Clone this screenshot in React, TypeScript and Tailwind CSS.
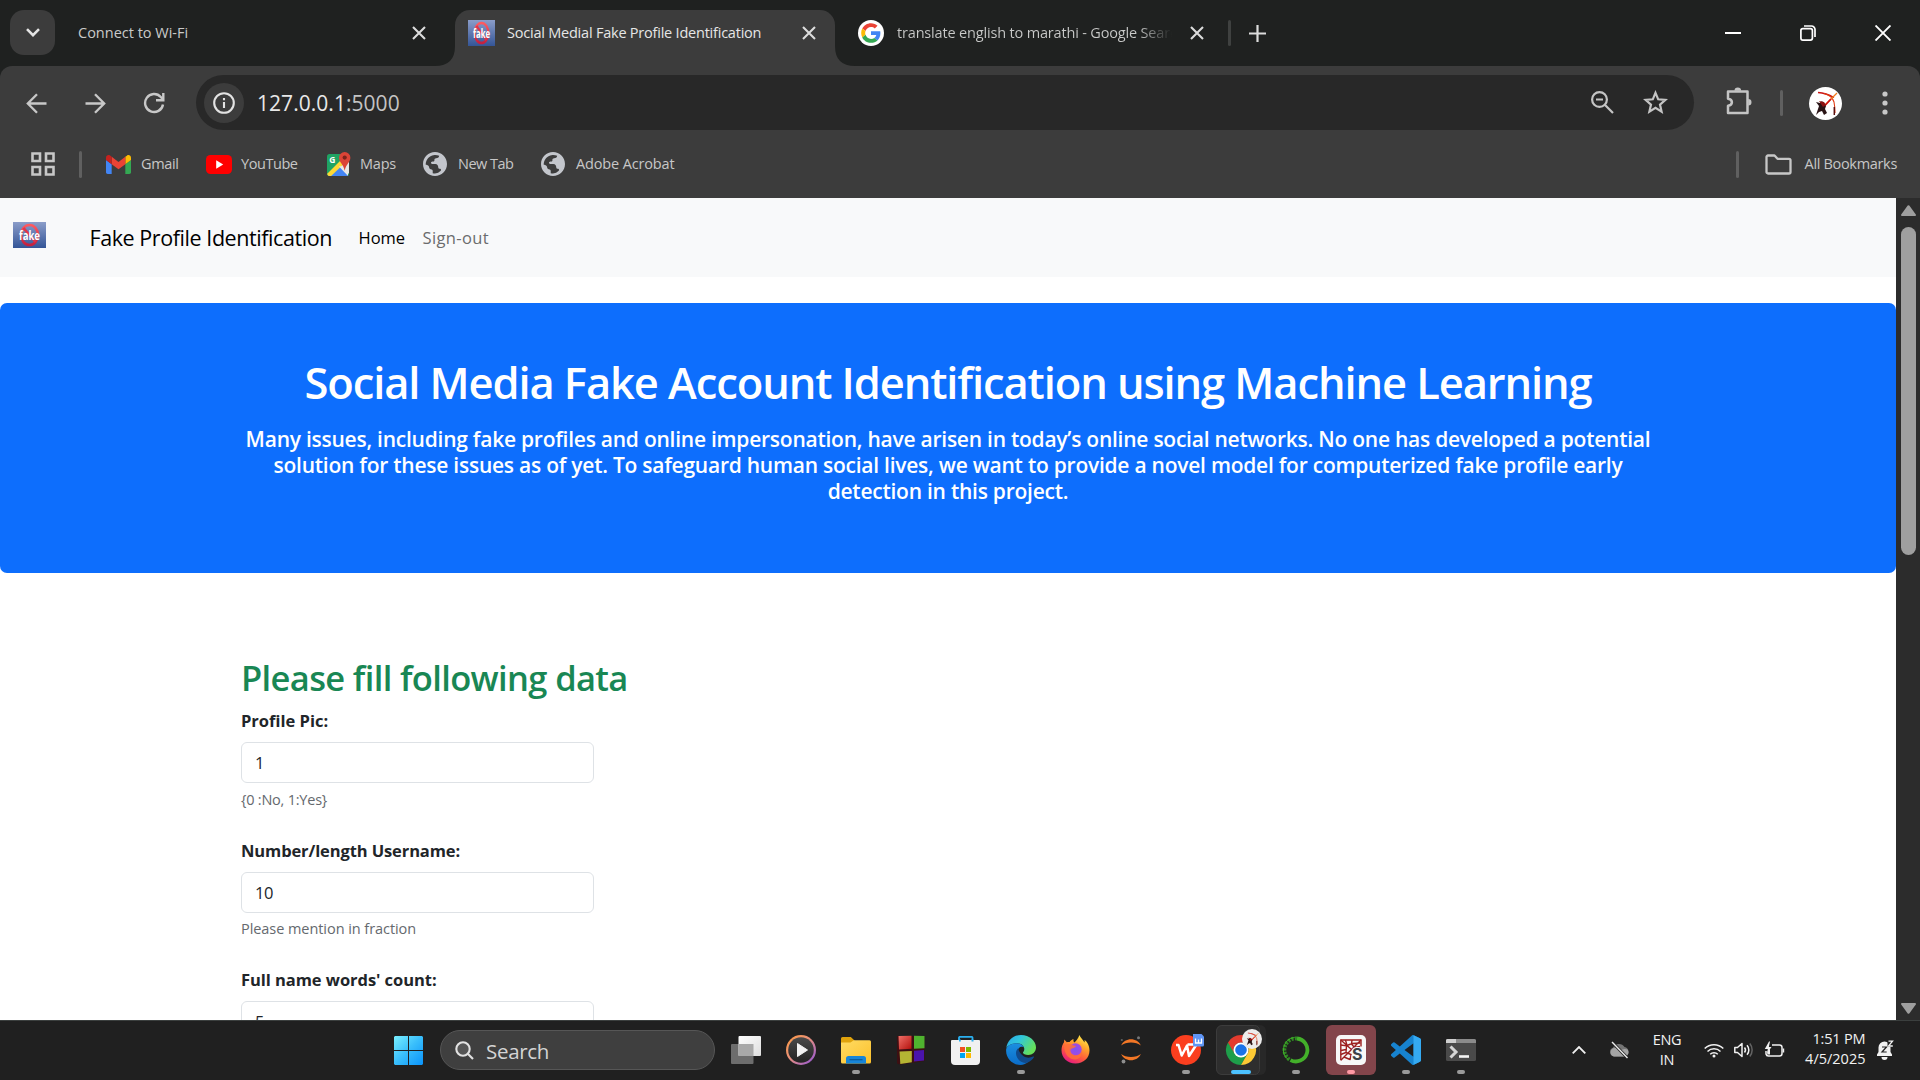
import React from "react";
import type { ReactNode } from "react";

/* ---------- browser icons ---------- */

function FakeLogo({ className, id }: { className: string; id: string }) {
  return (
    <svg viewBox="0 0 33 26" preserveAspectRatio="none" className={className}>
      <defs>
        <linearGradient id={id} x1="0" y1="0" x2="0" y2="1">
          <stop offset="0" stopColor="#8b9dc9" />
          <stop offset="1" stopColor="#345597" />
        </linearGradient>
        <linearGradient id={id + "r"} x1="0" y1="0" x2="0" y2="1">
          <stop offset="0" stopColor="#ff5a5f" />
          <stop offset="1" stopColor="#c4213f" />
        </linearGradient>
      </defs>
      <rect width="33" height="26" fill={`url(#${id})`} />
      <ellipse cx="16.5" cy="13" rx="8.4" ry="10" fill="none" stroke={`url(#${id}r)`} strokeWidth="2.6" />
      <path d="M10.5 6 22.5 20" stroke="#e0354a" strokeWidth="2.6" />
      <text x="16.5" y="17.6" textAnchor="middle" textLength="21" lengthAdjust="spacingAndGlyphs" fontSize="12.5" fontWeight="700" fill="#fff" fontFamily="Open Sans, sans-serif">
        fake
      </text>
    </svg>
  );
}

function GoogleIcon() {
  return (
    <svg viewBox="0 0 26 26" className="size-[26px] shrink-0">
      <circle cx="13" cy="13" r="13" fill="#fff" />
      <g transform="translate(3.2 3.2) scale(.408)">
        <path fill="#EA4335" d="M24 9.5c3.54 0 6.71 1.22 9.21 3.6l6.85-6.85C35.9 2.38 30.47 0 24 0 14.62 0 6.51 5.38 2.56 13.22l7.98 6.19C12.43 13.72 17.74 9.5 24 9.5z" />
        <path fill="#4285F4" d="M46.98 24.55c0-1.57-.15-3.09-.38-4.55H24v9.02h12.94c-.58 2.96-2.26 5.48-4.78 7.18l7.73 6c4.51-4.18 7.09-10.36 7.09-17.65z" />
        <path fill="#FBBC05" d="M10.53 28.59c-.48-1.45-.76-2.99-.76-4.59s.27-3.14.76-4.59l-7.98-6.19C.92 16.46 0 20.12 0 24c0 3.88.92 7.54 2.56 10.78l7.97-6.19z" />
        <path fill="#34A853" d="M24 48c6.48 0 11.93-2.13 15.89-5.81l-7.73-6c-2.15 1.45-4.92 2.3-8.16 2.3-6.26 0-11.57-4.22-13.47-9.91l-7.98 6.19C6.51 42.62 14.62 48 24 48z" />
      </g>
    </svg>
  );
}

function CloseIcon({ className = "" }: { className?: string }) {
  return (
    <svg viewBox="0 0 14 14" className={"size-[14px] shrink-0 " + className} fill="none" stroke="#dcdcdc" strokeWidth="2.1">
      <path d="M1 1l12 12M13 1 1 13" />
    </svg>
  );
}

function GlobeIcon() {
  return (
    <svg viewBox="2 2 20 20" className="size-6 shrink-0" fill="#c3c6cc">
      <path d="M12 2C6.48 2 2 6.48 2 12s4.480 10 10 10 10-4.480 10-10S17.520 2 12 2zm3.500 3.200c-.3 1.500-1.300 2-2.600 2.100-1 .1-1.500.6-1.400 1.500.1.900-.5 1.200-1.600 1.200-1.200.1-1.500.9-1 1.600.6.700 2 .4 3.500.4 1.400.1 2.300 1.300 2.300 2.700 0 .9.600 1.300 1.500 1.300.8.100 1 .8.600 1.600A7.900 7.900 0 0 1 12 20c-.700 0-1.300-.1-1.900-.2v-2c0-.9-.7-1.400-1.600-1.500-.9-.1-1.300-.8-1.400-1.600-.1-.9-1.200-1.800-2.900-2.200A8 8 0 0 1 15.500 5.200z" fillRule="evenodd" />
    </svg>
  );
}

function ArcherFigure() {
  return (
    <g>
      <path d="M9 5.5Q17 6 25 10.5" stroke="#c81414" strokeWidth="1.3" fill="none" />
      <path d="M15 6.5Q23 8.5 25 15Q26 20 26 26" stroke="#e03a12" strokeWidth="1.1" fill="none" />
      <path d="M25.3 20v8" stroke="#5a1010" strokeWidth="1.5" />
      <path d="M28 6 15 19" stroke="#f07a1a" strokeWidth="1.2" />
      <path d="M22 12 14.5 20" stroke="#d01010" strokeWidth="1.8" />
      <path d="M7 15l4 1 2-2 2 3 2 2-1 3 2 4-3 2-2-4-3 1-3 3 2-6 1-3z" fill="#2a1416" />
      <path d="M10 14l5 1 2 3-3 2z" fill="#8c1212" />
    </g>
  );
}

/* ---------- browser chrome ---------- */

function TabStrip() {
  return (
    <div className="flex h-[66px] items-start bg-[#1f2120]">
      <div className="ml-[10px] mt-[10px] flex h-[45px] w-[45px] items-center justify-center rounded-[14px] bg-[#3c3c3c]">
        <svg viewBox="0 0 14 9" className="h-[9px] w-[14px]" fill="none" stroke="#e4e4e4" strokeWidth="2.6">
          <path d="M1 1.2l6 6 6-6" />
        </svg>
      </div>
      <div className="flex h-[66px] w-[380px] items-center pl-[23px]">
        <span className="w-[334px] text-[14.5px] text-[#c9cac9]">Connect to Wi-Fi</span>
        <CloseIcon />
      </div>
      <svg viewBox="0 0 20 20" className="size-5 self-end" fill="#3c3c3c">
        <path d="M20 0v20H0Q20 20 20 0z" />
      </svg>
      <div className="mt-[10px] flex h-[56px] w-[380px] items-center rounded-t-[15px] bg-[#3c3c3c] pb-[10px] pl-[13px]">
        <FakeLogo className="h-[26px] w-[27px]" id="fav" />
        <span className="ml-[12px] w-[294px] whitespace-nowrap text-[14.5px] tracking-[-0.22px] text-[#e6e6e6]">
          Social Medial Fake Profile Identification
        </span>
        <CloseIcon className="ml-[1px]" />
      </div>
      <svg viewBox="0 0 20 20" className="size-5 self-end" fill="#3c3c3c">
        <path d="M0 0v20h20Q0 20 0 0z" />
      </svg>
      <div className="flex h-[66px] w-[415px] shrink-0 items-center pl-[3px]">
        <GoogleIcon />
        <span className="ml-[13px] w-[275px] shrink-0 overflow-hidden whitespace-nowrap bg-gradient-to-r from-[#c9cac9] from-88% to-[#1f2120] bg-clip-text text-[14.5px] tracking-[-0.17px] text-transparent">
          translate english to marathi - Google Search
        </span>
        <CloseIcon className="ml-[18px]" />
        <div className="ml-[24px] h-[26px] w-[3px] shrink-0 rounded bg-[#3f4140]" />
        <svg viewBox="0 0 17 17" className="ml-[18px] size-[17px] shrink-0" stroke="#dcdcdc" strokeWidth="2.2">
          <path d="M8.500 0v17M0 8.500h17" />
        </svg>
      </div>
      <div className="ml-auto mr-[29px] flex h-[66px] items-center gap-[59px]">
        <div className="h-[2px] w-4 bg-white" />
        <svg viewBox="0 0 16 16" className="size-4" fill="none" stroke="#fff" strokeWidth="1.7">
          <rect x=".9" y="3.600" width="11.500" height="11.500" rx="2" />
          <path d="M4 1h7.500a3.500 3.500 0 0 1 3.500 3.500V12" />
        </svg>
        <svg viewBox="0 0 16 16" className="size-4" fill="none" stroke="#fff" strokeWidth="1.9">
          <path d="M.5.5l15 15M15.500.5l-15 15" />
        </svg>
      </div>
    </div>
  );
}

function Toolbar() {
  return (
    <div className="flex h-[73px] items-center pl-[26px]">
      <svg viewBox="0 0 21 21" className="mt-px size-[21px]" fill="none" stroke="#c8c8c8" strokeWidth="2.3">
        <path d="M20.500 10.500H2M11 1.200 1.800 10.500l9.200 9.300" />
      </svg>
      <svg viewBox="0 0 21 21" className="mt-px ml-[38px] size-[21px]" fill="none" stroke="#c8c8c8" strokeWidth="2.3">
        <path d="M.5 10.500H19M10 1.200l9.200 9.300L10 19.800" />
      </svg>
      <svg viewBox="0 0 22 22" className="mt-px ml-[37px] size-[22px]" fill="none" stroke="#c8c8c8" strokeWidth="2.4">
        <path d="M20 12.500A9 9 0 1 1 17.800 5l2 2.200" />
        <path d="M20.300 1v7.300H13" />
      </svg>
      <div className="ml-[31px] flex h-[55px] w-[1498px] items-center rounded-full bg-[#282828] pl-[8px]">
        <div className="flex size-[40px] items-center justify-center rounded-full bg-[#3c3c3c]">
          <svg viewBox="0 0 22 22" className="size-[22px]" fill="none" stroke="#e3e3e3" strokeWidth="2.1">
            <circle cx="11" cy="11" r="9.800" />
            <path d="M11 10v6M11 6v2.200" />
          </svg>
        </div>
        <span className="mt-[2px] ml-[13px] w-[1334px] text-[21px] leading-none tracking-[0.04px] text-[#e8e8e8]">
          127.0.0.1<span className="text-[#c4c4c4]">:5000</span>
        </span>
        <svg viewBox="0 0 23 23" className="size-[23px]" fill="none" stroke="#c4c4c4" strokeWidth="2.2">
          <circle cx="8.500" cy="8.500" r="7.400" />
          <path d="M13.800 13.800 22 22M5 8.500h7" />
        </svg>
        <svg viewBox="0 0 25 24" className="-mt-[2px] ml-[29px] h-[24px] w-[25px]" fill="none" stroke="#c4c4c4" strokeWidth="2.200">
          <path d="M12.500 2.800l2.700 6.500 7.200.6-5.400 4.700 1.600 7-6.100-3.700-6.100 3.700 1.600-7L2.600 9.900l7.200-.6z" />
        </svg>
      </div>
      <svg viewBox="0 0 28 28" className="-mt-[4px] ml-[31px] size-7" fill="none" stroke="#c4c4c4" strokeWidth="2.500" strokeLinejoin="round">
        <path d="M3 4.500h19.500V26H3v-7.300c5.200-.6 5.200-6.400 0-7z" />
        <path d="M9.500 3.800a3.300 3.300 0 0 1 6.600 0zM23.200 12v6.600a3.300 3.300 0 0 0 0-6.600z" fill="#c4c4c4" stroke="none" />
      </svg>
      <div className="ml-[27px] h-[26px] w-[3px] rounded bg-[#606060]" />
      <svg viewBox="0 0 33 33" className="mt-[1px] ml-[26px] size-[33px]">
        <circle cx="16.500" cy="16.500" r="16.500" fill="#fff" />
        <ArcherFigure />
      </svg>
      <svg viewBox="0 0 6 24" className="mt-px ml-[40px] h-6 w-[6px]" fill="#c8c8c8">
        <circle cx="3" cy="3" r="2.600" />
        <circle cx="3" cy="12" r="2.600" />
        <circle cx="3" cy="21" r="2.600" />
      </svg>
    </div>
  );
}

function BookmarksBar() {
  return (
    <div className="flex h-[59px] items-start text-[14.5px] text-[#c7c7c7]">
      <div className="flex h-[50px] w-full items-center pl-[31px]">
        <svg viewBox="0 0 24 24" className="size-6" fill="none" stroke="#c7c7c7" strokeWidth="2.600">
          <path d="M1.500 1.500h7.500v7.500H1.500zM15 1.500h7.500v7.500H15zM1.500 15h7.500v7.500H1.500zM15 15h7.500v7.500H15z" />
        </svg>
        <div className="ml-[24px] h-[27px] w-[3px] rounded bg-[#606060]" />
        <svg viewBox="52 42 88 66" className="ml-[24px] h-[19px] w-[25px]">
          <path fill="#4285f4" d="M58 108h14V74L52 59v43c0 3.320 2.690 6 6 6" />
          <path fill="#34a853" d="M120 108h14c3.320 0 6-2.690 6-6V59l-20 15" />
          <path fill="#fbbc04" d="M120 48v26l20-15v-8c0-7.420-8.470-11.650-14.400-7.200" />
          <path fill="#ea4335" d="M72 74V48l24 18 24-18v26L96 92" />
          <path fill="#c5221f" d="M52 51v8l20 15V48l-5.600-4.400c-5.940-4.450-14.400-.22-14.400 7.200" />
        </svg>
        <span className="ml-[10px] w-[64px] tracking-[-0.36px]">Gmail</span>
        <svg viewBox="0 0 26 19" className="ml-px h-[19px] w-[26px]">
          <rect width="26" height="19" rx="4.500" fill="#f00" />
          <path d="M10.200 5.200v8.600l7-4.300z" fill="#fff" />
        </svg>
        <span className="ml-[9px] w-[85px] tracking-[-0.44px]">YouTube</span>
        <svg viewBox="0 0 25 25" className="size-[25px]">
          <defs>
            <clipPath id="mapclip">
              <rect x="1" y="2" width="22" height="22" rx="2.500" />
            </clipPath>
          </defs>
          <g clipPath="url(#mapclip)">
            <rect x="1" y="2" width="22" height="22" fill="#1fa463" />
            <path d="M12 13 24 25H1z" fill="#4285f4" />
            <path d="M13 12 24 23V3h-6z" fill="#e4e4e4" />
            <path d="M12 15.500 21 24.500H3z" fill="#4285f4" />
            <path d="M1 22 18 5l3.500 3.500L3 26z" fill="#fdd835" />
            <path d="M13 14.500 22 24V13z" fill="#e8e8e8" />
          </g>
          <text x="3.200" y="10.800" fontSize="8.500" fontWeight="700" fill="#fff" fontFamily="Open Sans, sans-serif">
            G
          </text>
          <path d="M18.700 0a5.700 5.700 0 0 1 5.700 5.700c0 4.300-4.200 6-5.700 13-1.500-7-5.700-8.700-5.700-13A5.700 5.700 0 0 1 18.700 0z" fill="#db4437" />
          <circle cx="18.700" cy="5.600" r="2.100" fill="#7b231c" />
        </svg>
        <span className="ml-[9px] w-[63px] tracking-[-0.23px]">Maps</span>
        <GlobeIcon />
        <span className="ml-[11px] w-[83px] tracking-[-0.5px]">New Tab</span>
        <GlobeIcon />
        <span className="ml-[11px] tracking-[-0.15px]">Adobe Acrobat</span>
        <div className="ml-auto h-[27px] w-[3px] rounded bg-[#606060]" />
        <svg viewBox="0 0 27 21" className="ml-[26px] h-[21px] w-[27px]" fill="none" stroke="#c7c7c7" strokeWidth="2.300" strokeLinejoin="round">
          <path d="M1.500 3a1.500 1.500 0 0 1 1.500-1.500h6.500l3 3.300H24a1.500 1.500 0 0 1 1.500 1.500V18a1.500 1.500 0 0 1-1.500 1.500H3A1.500 1.500 0 0 1 1.500 18z" />
        </svg>
        <span className="mr-[23px] ml-[13px] tracking-[-0.32px]">All Bookmarks</span>
      </div>
    </div>
  );
}

/* ---------- web page ---------- */

function Field({ label, labelClass, value, help, helpClass }: { label: string; labelClass: string; value: string; help: string; helpClass: string }) {
  return (
    <div className="mb-[27.5px] flex w-[353px] shrink-0 flex-col">
      <label className={"h-[26px] whitespace-nowrap text-[16.5px] leading-[26px] font-bold text-[#212529] " + labelClass}>{label}</label>
      <div className="mt-2 flex h-[41px] items-center rounded-[6px] border border-[#dee2e6] pt-[2px] pl-[13px] text-[16.5px] tracking-[-0.5px] text-[#212529]">
        {value}
      </div>
      <div className={"h-[27px] text-[14.5px] text-[#65696e] " + helpClass}>{help}</div>
    </div>
  );
}

function WebPage() {
  return (
    <div className="flex h-[822px] w-[1896px] flex-col overflow-hidden bg-white">
      <nav className="flex h-[79px] shrink-0 items-center bg-[#f8f9fa]">
        <FakeLogo className="mb-[5px] ml-[13px] h-[26px] w-[33px]" id="nav" />
        <span className="mt-[2px] ml-[43.5px] w-[269px] whitespace-nowrap text-[21.5px] tracking-[-0.43px] text-black">Fake Profile Identification</span>
        <span className="mt-[2px] w-[64px] text-[16.5px] text-black">Home</span>
        <span className="mt-[2px] text-[16.5px] tracking-[0.36px] text-[#6b6c6d]">Sign-out</span>
      </nav>
      <section className="mt-[26px] flex h-[270px] shrink-0 flex-col items-center rounded-[7px] bg-[#0d6efd] pt-[53px] text-center text-white">
        <h1 className="h-[54px] whitespace-nowrap text-[43.5px] leading-[54px] font-semibold tracking-[-1.1px]">
          Social Media Fake Account Identification using Machine Learning
        </h1>
        <p className="mt-[16px] whitespace-nowrap text-[21px] leading-[26px] font-semibold tracking-[-0.245px]">
          Many issues, including fake profiles and online impersonation, have arisen in today’s online social networks. No one has developed a potential
          <br />
          solution for these issues as of yet. To safeguard human social lives, we want to provide a novel model for computerized fake profile early
          <br />
          detection in this project.
        </p>
      </section>
      <section className="mt-[84px] flex flex-col pl-[241px]">
        <h2 className="mb-[9px] h-[42px] text-[34.5px] leading-[42px] font-semibold tracking-[-0.64px] text-[#198754]">Please fill following data</h2>
        <Field label="Profile Pic:" labelClass="tracking-normal" value="1" help="{0 :No, 1:Yes}" helpClass="tracking-[-0.22px] leading-[33px]" />
        <Field label="Number/length Username:" labelClass="tracking-[-0.11px]" value="10" help="Please mention in fraction" helpClass="tracking-[-0.06px] leading-[31px]" />
        <Field label="Full name words' count:" labelClass="tracking-[-0.05px]" value="5" help="" helpClass="" />
      </section>
    </div>
  );
}

function Scrollbar() {
  return (
    <div className="flex w-6 flex-col items-center bg-[#2c2c2c] pt-[7px] pb-[6px] pl-[1px]">
      <svg viewBox="0 0 15 11" className="h-[11px] w-[15px]" fill="#9f9f9f" stroke="#9f9f9f" strokeWidth="2" strokeLinejoin="round">
        <path d="M7.500 1.200 14 10H1z" />
      </svg>
      <div className="mt-[11px] h-[328px] w-[15px] rounded-full bg-[#9f9f9f]" />
      <svg viewBox="0 0 15 11" className="mt-auto h-[11px] w-[15px]" fill="#9f9f9f" stroke="#9f9f9f" strokeWidth="2" strokeLinejoin="round">
        <path d="M7.500 9.800 14 1H1z" />
      </svg>
    </div>
  );
}

/* ---------- taskbar ---------- */

function TaskItem({ children, indicator = "none", boxClass = "" }: { children: ReactNode; indicator?: "none" | "idle" | "active" | "alert"; boxClass?: string }) {
  return (
    <div className={"relative flex h-[50px] w-[50px] shrink-0 items-center justify-center rounded-[6px] " + boxClass}>
      {children}
      {indicator === "idle" && <div className="absolute bottom-[1px] h-1 w-2 rounded-full bg-[#9a9a9a]" />}
      {indicator === "active" && <div className="absolute bottom-[1px] h-1 w-5 rounded-full bg-[#4cc2ff]" />}
      {indicator === "alert" && <div className="absolute bottom-[1px] h-1 w-2 rounded-full bg-[#ff99a4]" />}
    </div>
  );
}

function WindowsIcon() {
  return (
    <svg viewBox="0 0 29 29" className="size-[29px]">
      <defs>
        <linearGradient id="win" gradientUnits="userSpaceOnUse" x1="0" y1="0" x2="29" y2="29">
          <stop offset="0" stopColor="#7af0ff" />
          <stop offset=".5" stopColor="#38bdfb" />
          <stop offset="1" stopColor="#0a93fb" />
        </linearGradient>
      </defs>
      <path d="M1 0h13v14H0V1zM15 0h13l1 1v13H15zM0 15h14v14H1l-1-1zM15 15h14v13l-1 1H15z" fill="url(#win)" />
    </svg>
  );
}

function TaskViewIcon() {
  return (
    <svg viewBox="0 0 30 28" className="h-7 w-[30px]">
      <defs>
        <linearGradient id="tv" x1="0" y1="0" x2="1" y2="1">
          <stop offset="0" stopColor="#fff" />
          <stop offset="1" stopColor="#dedede" />
        </linearGradient>
      </defs>
      <rect x="0" y="8" width="22.500" height="20" rx="1" fill="#6d6d6d" />
      <rect x="7.500" y="0" width="22.500" height="20" rx="1" fill="url(#tv)" />
      <path d="M7.500 8h15v12h-15z" fill="#a9a9a9" />
    </svg>
  );
}

function MediaPlayerIcon() {
  return (
    <svg viewBox="0 0 30 30" className="size-[30px]">
      <defs>
        <linearGradient id="mp" x1="0" y1="0" x2="1" y2="1">
          <stop offset="0" stopColor="#ff9a3c" />
          <stop offset=".45" stopColor="#e8917c" />
          <stop offset="1" stopColor="#8a4fe0" />
        </linearGradient>
        <linearGradient id="mpi" x1="0" y1="0" x2="0" y2="1">
          <stop offset="0" stopColor="#4a4a4a" />
          <stop offset="1" stopColor="#232323" />
        </linearGradient>
      </defs>
      <circle cx="15" cy="15" r="15" fill="url(#mp)" />
      <circle cx="15" cy="15" r="12.800" fill="url(#mpi)" />
      <path d="M11.500 8.500v13L21.500 15z" fill="#f3f3f3" stroke="#f3f3f3" strokeWidth="1" strokeLinejoin="round" />
    </svg>
  );
}

function ExplorerIcon() {
  return (
    <svg viewBox="0 0 30 27" className="mt-[1px] h-[27px] w-[30px]">
      <defs>
        <linearGradient id="fe" x1="0" y1="0" x2="1" y2="1">
          <stop offset="0" stopColor="#ffdb63" />
          <stop offset="1" stopColor="#fcc12c" />
        </linearGradient>
      </defs>
      <path d="M0 1.500A1.500 1.500 0 0 1 1.500 0h8.300L13.500 3.500V9H0z" fill="#e0a30c" />
      <path d="M0 5.500h9.500l3.300-2.300H28.500A1.500 1.500 0 0 1 30 4.700V25a1.500 1.500 0 0 1-1.500 1.500h-27A1.500 1.500 0 0 1 0 25z" fill="url(#fe)" />
      <path d="M5 26.500v-5a2.500 2.500 0 0 1 2.500-2.500h15a2.500 2.500 0 0 1 2.500 2.500v5z" fill="#1785d8" />
      <path d="M8.500 22.700h13" stroke="#0b5899" strokeWidth="1.200" />
    </svg>
  );
}

function BlocksIcon() {
  return (
    <svg viewBox="0 0 28 30" className="h-[30px] w-7">
      <defs>
        <linearGradient id="bl" x1="0" y1="0" x2="1" y2="1">
          <stop offset="0" stopColor="#f07068" />
          <stop offset="1" stopColor="#b3100c" />
        </linearGradient>
      </defs>
      <path d="M0 1v27.500l3 1L27.500 26V1z" fill="#3d0f12" />
      <path d="M1.500 1 14.500.800V13.800L2 14.500z" fill="url(#bl)" />
      <path d="M17 .800 27.500 1v12.200L17 13.800z" fill="#4fb32f" />
      <path d="M2.500 16.500 14.800 16v11.300L3.300 29z" fill="#b5b533" />
      <path d="M17 15.800 27 15v10.500l-10 1z" fill="#4a14ac" />
    </svg>
  );
}

function StoreIcon() {
  return (
    <svg viewBox="0 0 29 29" className="mr-px size-[29px]">
      <path d="M8 6V1.800A1 1 0 0 1 9 .800h11.500a1 1 0 0 1 1 1V6" fill="none" stroke="#2ab0f0" strokeWidth="1.800" />
      <path d="M1 4h27a1 1 0 0 1 1 1v20a4 4 0 0 1-4 4H4a4 4 0 0 1-4-4V5a1 1 0 0 1 1-1z" fill="#f1f1f1" />
      <path d="M8 4.500h1.800M20.500 4.500h2" stroke="#2ab0f0" strokeWidth="2" />
      <path d="M9 11h5v5H9z" fill="#f25022" />
      <path d="M15 11h5v5h-5z" fill="#7fba00" />
      <path d="M9 17h5v5H9z" fill="#00a4ef" />
      <path d="M15 17h5v5h-5z" fill="#ffb900" />
    </svg>
  );
}

function EdgeIcon() {
  return (
    <svg viewBox="0 0 30 30" className="size-[30px]">
      <defs>
        <linearGradient id="eg" x1="0" y1="0" x2="1" y2=".5">
          <stop offset="0" stopColor="#2aa5e8" />
          <stop offset=".45" stopColor="#30c6dc" />
          <stop offset="1" stopColor="#66e05a" />
        </linearGradient>
        <linearGradient id="eb" x1="0" y1="0" x2="0" y2="1">
          <stop offset="0" stopColor="#1b8fe0" />
          <stop offset="1" stopColor="#0b6cc8" />
        </linearGradient>
      </defs>
      <path d="M.3 13C1.500 5 7.500 0 15 0c8.500 0 15 6 15 12.500 0 4.500-3.500 7.500-7.800 7.500-3 0-5.200-1.200-5.200-2.300 0-.8 1.300-1.400 1.300-3.700C18.300 11 15.500 8.200 11 8.200 6 8.200 1.500 10.500.3 13z" fill="url(#eg)" />
      <path d="M.2 14C1.200 10.500 5.500 8.200 10.500 8.200c4 0 6.500 2 7.500 4-3-1.300-6.500.3-6.500 5.300 0 6 5.500 10 11 9-2.200 2-5 3.500-8 3.500C6.500 29.800-.8 23 .2 14z" fill="url(#eb)" />
      <path d="M12.200 13.300C10 15 9.500 18 10.500 21c1.800 5 7 8.300 11.800 6.300 2.500-1.100 4.500-3.200 5.600-5.100.4-.7-.2-1-.8-.7-3 1.700-7 1.500-9.800-.5-2.300-1.800-4.500-4.300-5.100-7.700z" fill="#114a8b" />
    </svg>
  );
}

function FirefoxIcon() {
  return (
    <svg viewBox="0 0 29 30" className="mr-px h-[30px] w-[29px]">
      <defs>
        <linearGradient id="ff" x1=".8" y1="0" x2=".25" y2="1">
          <stop offset="0" stopColor="#fff44f" />
          <stop offset=".35" stopColor="#ffa22c" />
          <stop offset=".65" stopColor="#ff5a3c" />
          <stop offset="1" stopColor="#e31587" />
        </linearGradient>
        <radialGradient id="fp">
          <stop offset="0" stopColor="#7d54f5" />
          <stop offset="1" stopColor="#a24adf" />
        </radialGradient>
      </defs>
      <path d="M18.500 0c.5 2.500 3.500 4.500 5 7.500.3-1 .2-1.800 0-2.500 3 2 5 6 5 10.500C28.500 23 22.500 28.500 14.500 28.500S.5 22.500.5 15.200c0-3.200 1-6 2.500-8L3.300 4.500l2.500 2.800c1-.4 1.800-.4 2.800-.3C9.500 5.500 11 4.500 12.500 4c-.3 1.200 0 2.500.7 3.500 1.500-1 4-4 5.300-7.500z" fill="url(#ff)" />
      <circle cx="14.500" cy="14.500" r="6.200" fill="url(#fp)" />
      <path d="M3 11c2.500-2 5.500-2.500 8-1.500 1 .5 2 1.500 4 1.500-.5 2-4 2-5.500 3.500-.5 3.500 2.500 6 5.500 5.800 2.500 0 4.500-1.500 5.700-4.300.6 4.500-2.200 8.500-6.700 8.500C8.500 24.500 3.500 20 3 11z" fill="#ff7038" opacity=".85" />
    </svg>
  );
}

function JupyterIcon() {
  return (
    <svg viewBox="0 0 22 28" className="h-7 w-[22px]">
      <path d="M1.200 9.500C4.500 1.200 17.500 1.200 20.800 9.500 16.500 5.500 5.500 5.500 1.200 9.500z" fill="#f37726" />
      <path d="M1.200 18C4.500 26.300 17.500 26.300 20.800 18 16.500 22 5.500 22 1.200 18z" fill="#f37726" />
      <circle cx="18.500" cy="1.800" r="1.500" fill="#767677" />
      <circle cx="3.500" cy="25.500" r="1.900" fill="#8e8e8e" />
      <circle cx="1.800" cy="4" r="1.100" fill="#616262" />
    </svg>
  );
}

function WpsIcon() {
  return (
    <svg viewBox="0 0 50 50" className="size-[50px]">
      <circle cx="25" cy="25" r="15" fill="#fb3f1f" />
      <path d="M15 20h2.500l3.200 10.500 5.300-10 2 10.500 7.500-11.500h-9" fill="none" stroke="#fff" strokeWidth="2.500" strokeLinejoin="round" />
      <path d="M32 9h8.500l2.500 2.500V20a1.500 1.500 0 0 1-1.500 1.500H33.500A1.500 1.500 0 0 1 32 20z" fill="#5f95f5" />
      <path d="M34.500 13.500v4.500h6v-4.500M37.500 14.500V18" fill="none" stroke="#fff" strokeWidth="1.300" />
    </svg>
  );
}

function ChromeIcon() {
  return (
    <svg viewBox="0 0 50 50" className="size-[50px] shrink-0">
      <path d="M.5 6A5.500 5.500 0 0 1 6 .5h32.500A5 5 0 0 1 43.500 5.500v39a5 5 0 0 1-5 5H6A5.500 5.500 0 0 1 .5 44z" fill="#2e2e2e" stroke="#3c3c3c" />
      <path d="M12 17.500A15 15 0 0 0 25 40l6.500-11.300L25 25z" fill="#1e9e4a" />
      <path d="M38 17.500A15 15 0 0 1 25 40l6.500-11.300a7.500 7.500 0 0 0 0-7.500l-2-3.700z" fill="#fcc934" />
      <path d="M12 17.500A15 15 0 0 1 38 17.500H25a7.500 7.500 0 0 0-6.500 11.200z" fill="#e33b2e" />
      <circle cx="25" cy="25" r="7.500" fill="#fff" />
      <circle cx="25" cy="25" r="5.800" fill="#1a73e8" />
      <circle cx="36" cy="14" r="10" fill="#ececec" />
      <g transform="translate(27 5) scale(.545)">
        <ArcherFigure />
      </g>
    </svg>
  );
}

function AnacondaIcon() {
  return (
    <svg viewBox="0 0 28 28" className="size-7" fill="none">
      <path d="M15 2.500a11.500 11.500 0 1 1-6.500 21.600" stroke="#43b02a" strokeWidth="3.800" />
      <path d="M15 2.500A11.500 11.500 0 0 0 8.500 24.100" stroke="#2f8a22" strokeWidth="3.800" strokeDasharray="2.200 1.300" />
      <path d="M12.500 1.500A12.500 12.500 0 0 0 6 23.500" stroke="#43b02a" strokeWidth="1" />
    </svg>
  );
}

function SpyderIcon() {
  return (
    <svg viewBox="0 0 30 30" className="size-[30px]">
      <rect width="30" height="30" rx="5" fill="#f7f7f7" />
      <g fill="none" stroke="#9c1f1f" strokeWidth="1.400">
        <path d="M4.800 25.200V5H25v6.500" />
        <path d="M4.800 25.200 15.500 14.500 25 5M4.800 5 15.500 14.500M9.500 5l1.500 5.500 5-2 8.500-.5M4.800 10l5.700.8-.5 6.700-5.200 2M16 5l-.5 4 3 3.500L24 11.500M5 15.500l5-1M10 17.500l5 2-1 5.500M8 22l6 2.500" />
      </g>
      <text x="16" y="25.300" fontSize="16" fontWeight="700" fill="#3c4248" stroke="#f7f7f7" strokeWidth="2" paintOrder="stroke" fontFamily="Inter, sans-serif">
        S
      </text>
    </svg>
  );
}

function VsCodeIcon() {
  return (
    <svg viewBox="0 0 24 24" className="size-[30px]">
      <path
        fill="#1783cf"
        d="M23.150 2.587L18.210.21a1.494 1.494 0 0 0-1.705.29l-9.460 8.630-4.120-3.128a.999.999 0 0 0-1.276.057L.327 7.261A1 1 0 0 0 .326 8.740L3.899 12 .326 15.260a1 1 0 0 0 .001 1.479L1.650 17.940a.999.999 0 0 0 1.276.057l4.120-3.128 9.460 8.630a1.492 1.492 0 0 0 1.704.290l4.942-2.377A1.500 1.500 0 0 0 24 20.060V3.939a1.500 1.500 0 0 0-.850-1.352zm-5.146 14.861L10.826 12l7.178-5.448v10.896z"
      />
      <path fill="#35aaf2" d="M18.004.150l5.146 2.437A1.500 1.500 0 0 1 24 3.939V20.060a1.500 1.500 0 0 1-.850 1.350l-4.942 2.378q-.100.050-.204.080z" />
    </svg>
  );
}

function TerminalIcon() {
  return (
    <svg viewBox="0 0 30 22" className="h-[22px] w-[30px]">
      <rect width="30" height="22" rx="1.500" fill="#4a4a4a" />
      <path d="M0 4V1.500A1.500 1.500 0 0 1 1.500 0h27A1.500 1.500 0 0 1 30 1.500V4z" fill="#8b8b8b" />
      <path d="M0 4V1.500A1.500 1.500 0 0 1 1.500 0H10v4z" fill="#cfcfcf" />
      <path d="M4.500 7.500 10 13l-5.500 5.500" fill="none" stroke="#d6d6d6" strokeWidth="3" />
      <path d="M13 17.500h10" stroke="#f4f4f4" strokeWidth="2.600" />
    </svg>
  );
}

function Tray() {
  return (
    <div className="flex h-full items-center text-[14.5px] leading-5 text-[#f2f2f2]">
      <div className="ml-[77px] flex w-8 justify-center">
        <svg viewBox="0 0 14 8" className="h-2 w-[14px]" fill="none" stroke="#f0f0f0" strokeWidth="1.800">
          <path d="M.7 7.300 7 1l6.300 6.300" />
        </svg>
      </div>
      <div className="ml-1 flex w-10 justify-center">
        <svg viewBox="0 0 21 18" className="h-[18px] w-[21px]">
          <path d="M5 15.500A4.500 4.500 0 0 1 4 6.800 6.500 6.500 0 0 1 15.500 6 5 5 0 0 1 16.500 15.500z" fill="#747474" />
          <path d="M5 15.500a4.300 4.300 0 0 1 1-8.500q3-.5 5 2.500 4-2.500 7.500-1a4.500 4.500 0 0 1-2 7z" fill="#a4a4a4" />
          <path d="M3 1l15.500 16" stroke="#202020" strokeWidth="3" />
          <path d="M3 1l15.500 16" stroke="#ededed" strokeWidth="1.400" />
        </svg>
      </div>
      <div className="ml-2 flex w-10 flex-col items-center tracking-[-0.33px]">
        <span>ENG</span>
        <span>IN</span>
      </div>
      <div className="ml-3 flex w-[30px] justify-center">
        <svg viewBox="0 0 20 16" className="h-4 w-5" fill="none" stroke="#f0f0f0" strokeWidth="1.500">
          <path d="M.7 6.500a13.200 13.200 0 0 1 18.600 0M3.500 9.500a9.200 9.200 0 0 1 13 0M6.200 12.200a5.400 5.400 0 0 1 7.600 0" />
          <circle cx="10" cy="14" r="1.500" fill="#f0f0f0" stroke="none" />
        </svg>
      </div>
      <div className="flex w-[30px] justify-center">
        <svg viewBox="0 0 20 16" className="h-4 w-5" fill="none" stroke="#f0f0f0" strokeWidth="1.500" strokeLinejoin="round">
          <path d="M.8 5.500H3.500L8 1.500v13L3.500 10.500H.8z" />
          <path d="M10.500 5.500a4 4 0 0 1 0 5M13 3.200a7.200 7.200 0 0 1 0 9.600" />
          <path d="M15.800 1.500a10.200 10.200 0 0 1 0 13" stroke="#636363" />
        </svg>
      </div>
      <div className="flex w-[30px] justify-center">
        <svg viewBox="0 0 21 18" className="h-[18px] w-[21px]" fill="none" stroke="#f0f0f0" strokeWidth="1.500">
          <path d="M8 4h7.500A2.500 2.500 0 0 1 18 6.500v6a2.500 2.500 0 0 1-2.500 2.500h-11A2.500 2.500 0 0 1 2 13V10" />
          <path d="M18.700 7.500v4h1.500v-4z" fill="#f0f0f0" stroke="none" />
          <path d="M5 .5.8 8h3L3 12.500 7.500 6H4.800L6 .5z" fill="#f0f0f0" stroke="none" />
          <path d="M3.300 13.500V11L6 7.800v5.700z" fill="#f0f0f0" stroke="none" />
        </svg>
      </div>
      <div className="-mt-[2px] flex w-[76.5px] flex-col items-end">
        <span className="tracking-[-0.17px]">1:51 PM</span>
        <span>4/5/2025</span>
      </div>
      <div className="ml-[4.500px] flex w-[30px] justify-center">
        <svg viewBox="0 0 18 20" className="h-5 w-[18px]">
          <path d="M1 14.500 2.500 12V7.500A6 6 0 0 1 8.500 1.500 6 6 0 0 1 14.500 7.500V12l1.500 2.500V16H1z" fill="#f2f2f2" />
          <path d="M5.500 17h6a3 3 0 0 1-6 0z" fill="#f2f2f2" />
          <path d="M6 7h4.500L6 12h4.700" fill="none" stroke="#202020" strokeWidth="1.200" />
          <path d="M11.500 0H18v6.800h-6.500z" fill="#202020" />
          <path d="M12.500 1.200h4L12.500 6h4.300" fill="none" stroke="#f2f2f2" strokeWidth="1.300" />
        </svg>
      </div>
    </div>
  );
}

function Taskbar() {
  return (
    <div className="flex h-[60px] items-center border-t border-[#3b3f3e] bg-[#202020] pb-px pl-[383px]">
      <TaskItem>
        <WindowsIcon />
      </TaskItem>
      <div className="mr-[6px] ml-[7px] flex h-10 w-[275px] shrink-0 items-center rounded-full border border-[#565656] bg-[#3f3f3f] pl-[14px]">
        <svg viewBox="0 0 19 19" className="size-[19px]" fill="none" stroke="#e2e2e2" strokeWidth="2.100">
          <circle cx="8" cy="8" r="6.700" fill="#565656" />
          <path d="M12.800 12.800 18 18" />
        </svg>
        <span className="mt-[2px] ml-[12px] text-[20.5px] leading-none tracking-[-0.3px] text-[#d4d4d4]">Search</span>
      </div>
      <div className="flex gap-[5px]">
        <TaskItem>
          <TaskViewIcon />
        </TaskItem>
        <TaskItem>
          <MediaPlayerIcon />
        </TaskItem>
        <TaskItem indicator="idle">
          <ExplorerIcon />
        </TaskItem>
        <TaskItem>
          <BlocksIcon />
        </TaskItem>
        <TaskItem>
          <StoreIcon />
        </TaskItem>
        <TaskItem indicator="idle">
          <EdgeIcon />
        </TaskItem>
        <TaskItem>
          <FirefoxIcon />
        </TaskItem>
        <TaskItem>
          <JupyterIcon />
        </TaskItem>
        <TaskItem indicator="idle">
          <WpsIcon />
        </TaskItem>
        <TaskItem indicator="active" boxClass="bg-[#282828]">
          <ChromeIcon />
        </TaskItem>
        <TaskItem indicator="idle">
          <AnacondaIcon />
        </TaskItem>
        <TaskItem indicator="alert" boxClass="bg-[#83454b]">
          <SpyderIcon />
        </TaskItem>
        <TaskItem indicator="idle">
          <VsCodeIcon />
        </TaskItem>
        <TaskItem indicator="idle">
          <TerminalIcon />
        </TaskItem>
      </div>
      <Tray />
    </div>
  );
}

export default function App() {
  return (
    <div className="flex h-[1080px] w-[1920px] flex-col overflow-hidden font-['Open_Sans','Noto_Sans',sans-serif]">
      <TabStrip />
      <div className="bg-[#1f2120]">
        <div className="h-[132px] rounded-t-[12px] bg-[#3c3c3c]">
          <Toolbar />
          <BookmarksBar />
        </div>
      </div>
      <div className="flex h-[822px]">
        <WebPage />
        <Scrollbar />
      </div>
      <Taskbar />
    </div>
  );
}
